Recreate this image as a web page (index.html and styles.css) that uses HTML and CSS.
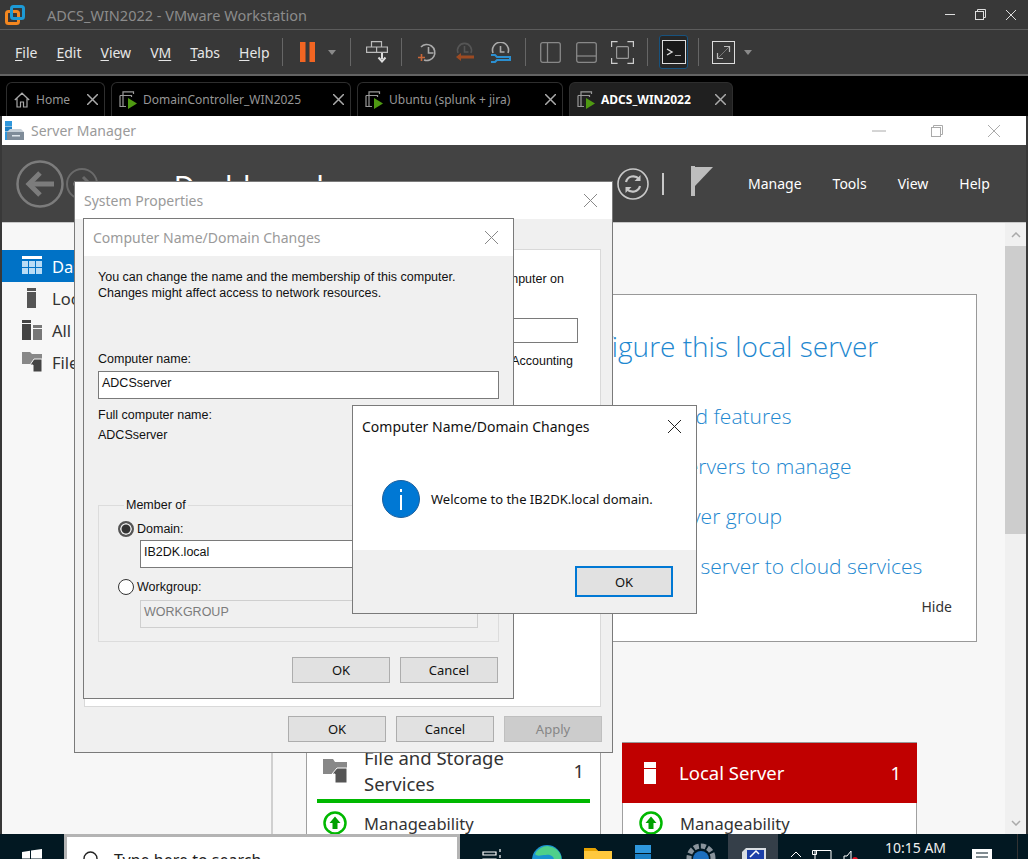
FILE: index.html
```html
<!DOCTYPE html>
<html lang="en">
<head>
    <meta charset="UTF-8">
    <title>ADCS_WIN2022 - VMware Workstation</title>
    <link rel="stylesheet" href="styles.css">
</head>
<body>
<div class="page">
    <div class="titlebar">
        <svg class="vm-logo" width="20" height="20" viewBox="0 0 20 20" fill="none">
            <rect x="1.5" y="6.5" width="12" height="12" rx="2" stroke="#f5871f" stroke-width="3"/>
            <rect x="6.5" y="1.5" width="12" height="12" rx="2" stroke="#1d9ad6" stroke-width="3"/>
        </svg>
        <span class="titlebar-text">ADCS_WIN2022 - VMware Workstation</span>
        <div class="win-ctl">
            <svg width="10" height="10" viewBox="0 0 10 10" stroke="#ddd" fill="none"><path d="M0 4.5h10"/></svg>
            <svg width="11" height="11" viewBox="0 0 11 11" stroke="#ddd" fill="none"><rect x=".5" y="2.5" width="8" height="8"/><path d="M2.5 2.5v-2h8v8h-2"/></svg>
            <svg width="10" height="10" viewBox="0 0 10 10" stroke="#ddd" fill="none"><path d="M0 0l10 10M10 0L0 10"/></svg>
        </div>
    </div>

    <div class="menubar">
        <div class="menu">
            <span><u>F</u>ile</span>
            <span><u>E</u>dit</span>
            <span><u>V</u>iew</span>
            <span>V<u>M</u></span>
            <span><u>T</u>abs</span>
            <span><u>H</u>elp</span>
        </div>
        <i class="sep sep-a"></i>
        <svg class="ico-pause" width="15" height="20" viewBox="0 0 15 20" fill="#f26522"><rect width="5.5" height="20"/><rect x="9.5" width="5.5" height="20"/></svg>
        <i class="caret caret-a"></i>
        <i class="sep sep-b"></i>
        <svg class="ico-send" width="22" height="22" viewBox="0 0 22 22" fill="none" stroke="#bbb" stroke-width="1.2"><path d="M5.500 .6h10v5.400h-10zM.6 6h10v5.400h-10zM10.600 6h10.800v5.400h-10.800z"/><path d="M16 12v6M12.500 16.500l3.500 4 3.500-4" stroke="#ddd" stroke-width="2"/></svg>
        <i class="sep sep-c"></i>
        <svg class="ico-snap" width="21" height="21" viewBox="0 0 21 21" fill="none" stroke="#aaa" stroke-width="1.600"><path d="M4 5a8 8 0 1 1 3 13"/><path d="M11.500 5v6h5"/><path d="M1 15.500h7M4.500 12v7" stroke="#c9683a"/></svg>
        <svg class="ico-snap2" width="21" height="21" viewBox="0 0 21 21" fill="none" stroke="#555" stroke-width="1.600"><path d="M4 11a7 7 0 1 1 13 0"/><path d="M10.500 4v6h4"/><path d="M20 15H4" stroke="#9c4a22" stroke-width="3"/><path d="M7 11l-5 4 5 4z" fill="#9c4a22" stroke="none"/></svg>
        <svg class="ico-snap3" width="21" height="21" viewBox="0 0 21 21" fill="none" stroke="#aaa" stroke-width="1.600"><path d="M3 11a8 8 0 1 1 15 0"/><path d="M10.500 4v6h4"/><path d="M1 13h4l2 2h13v3H7l-2 2H1" stroke="#2b8fd0" stroke-width="2"/></svg>
        <i class="sep sep-d"></i>
        <svg class="ico-panel" width="21" height="21" viewBox="0 0 21 21" fill="none" stroke="#888" stroke-width="1.300"><rect x=".7" y=".7" width="19.600" height="19.600" rx="2"/><path d="M7.500 .7v19.600"/></svg>
        <svg class="ico-panel2" width="21" height="21" viewBox="0 0 21 21" fill="none" stroke="#888" stroke-width="1.300"><rect x=".7" y=".7" width="19.600" height="19.600" rx="2"/><path d="M.7 14h19.600"/></svg>
        <svg class="ico-full" width="23" height="23" viewBox="0 0 23 23" fill="none" stroke="#ccc" stroke-width="1.200"><path d="M.6 6V.6h6M16.400 .6h6v5.400M22.400 17v5.400h-6M6.600 22.400h-6V17"/><rect x="5.600" y="5.600" width="11.800" height="11.800" rx="1" stroke="#999"/></svg>
        <i class="sep sep-e"></i>
        <div class="console">
            <svg width="24" height="24" viewBox="0 0 24 24" fill="#1a1a1a" stroke="#ddd"><rect x=".5" y=".5" width="23" height="23"/><path d="M5 9l5 3-5 3" fill="none" stroke-width="1.400"/><path d="M13 15.500h6" stroke="#aaa"/></svg>
        </div>
        <i class="sep sep-f"></i>
        <svg class="ico-stretch" width="23" height="23" viewBox="0 0 23 23" fill="none" stroke="#ddd"><rect x=".5" y=".5" width="22" height="22"/><path d="M6 17L17 6" stroke="#777"/><path d="M12 5.500h5.500V11M11 17.500H5.500V12" stroke="#bbb" stroke-width="1.200"/></svg>
        <i class="caret caret-b"></i>
    </div>

    <div class="tabstrip">
        <div class="tab tab-home">
            <svg width="16" height="16" viewBox="0 0 16 16" fill="none" stroke="#aaa" stroke-width="1.200"><path d="M.8 8L8 1.200 15.200 8M3 6.500V15h3.500v-5h3v5H13V6.500"/></svg>
            <span class="tab-name">Home</span>
            <svg class="tab-x" width="11" height="11" viewBox="0 0 11 11" stroke="#aaa" stroke-width="1.500"><path d="M0 0l11 11M11 0L0 11"/></svg>
        </div>
        <div class="tab tab-dc">
            <svg width="18" height="18" viewBox="0 0 18 18" fill="none" stroke="#999" stroke-width="1.200"><path d="M4 4V.8h10.500V3M4 4.500h8.500V6M4 4v11M4 4.500H1"/><path d="M1 4.500v11h6"/><path d="M9 7v11l9-5.500z" fill="#4f9a12" stroke="none"/></svg>
            <span class="tab-name">DomainController_WIN2025</span>
            <svg class="tab-x" width="11" height="11" viewBox="0 0 11 11" stroke="#aaa" stroke-width="1.500"><path d="M0 0l11 11M11 0L0 11"/></svg>
        </div>
        <div class="tab tab-ub">
            <svg width="18" height="18" viewBox="0 0 18 18" fill="none" stroke="#999" stroke-width="1.200"><path d="M4 4V.8h10.500V3M4 4.500h8.500V6M4 4v11M4 4.500H1"/><path d="M1 4.500v11h6"/><path d="M9 7v11l9-5.500z" fill="#4f9a12" stroke="none"/></svg>
            <span class="tab-name">Ubuntu (splunk + jira)</span>
            <svg class="tab-x" width="11" height="11" viewBox="0 0 11 11" stroke="#aaa" stroke-width="1.500"><path d="M0 0l11 11M11 0L0 11"/></svg>
        </div>
        <div class="tab tab-on">
            <svg width="18" height="18" viewBox="0 0 18 18" fill="none" stroke="#999" stroke-width="1.200"><path d="M4 4V.8h10.500V3M4 4.500h8.500V6M4 4v11M4 4.500H1"/><path d="M1 4.500v11h6"/><path d="M9 7v11l9-5.500z" fill="#4f9a12" stroke="none"/></svg>
            <span class="tab-name">ADCS_WIN2022</span>
            <svg class="tab-x" width="11" height="11" viewBox="0 0 11 11" stroke="#aaa" stroke-width="1.500"><path d="M0 0l11 11M11 0L0 11"/></svg>
        </div>
    </div>

    <div class="sm">
        <div class="sm-title">
            <svg width="20" height="20" viewBox="0 0 20 20"><rect x="1" y="0" width="7" height="5" fill="#2f97dc"/><rect x="1" y="5.500" width="7" height="5" fill="#1b7fc4"/><rect x="1" y="11" width="6" height="8" fill="#2f97dc"/><path d="M3 11h17v8H3z" fill="#7f8c99"/><path d="M3 11l3-3h11l3 3z" fill="#c7d0d8"/><rect x="8" y="14" width="8" height="1.500" fill="#dfe6ec"/></svg>
            <span class="sm-title-text">Server Manager</span>
            <div class="sm-ctl">
                <svg width="14" height="2" viewBox="0 0 14 2" stroke="#aaa"><path d="M0 1h14"/></svg>
                <svg width="12" height="12" viewBox="0 0 12 12" stroke="#aaa" fill="none"><rect x=".5" y="2.500" width="9" height="9"/><path d="M2.500 2.500v-2h9v9h-2"/></svg>
                <svg width="12" height="12" viewBox="0 0 12 12" stroke="#aaa" fill="none"><path d="M0 0l12 12M12 0L0 12"/></svg>
            </div>
        </div>

        <div class="sm-head">
            <svg class="back" width="48" height="48" viewBox="0 0 48 48" fill="none" stroke="#7c7c7c" stroke-width="2.500"><circle cx="24" cy="24" r="22.500"/><path d="M38 24H14" stroke-width="5"/><path d="M24 13L13 24l11 11" stroke-width="5"/></svg>
            <svg class="forward" width="32" height="32" viewBox="0 0 32 32" fill="none" stroke="#6a6a6a" stroke-width="2"><circle cx="16" cy="16" r="15"/><path d="M7 16h17M17 9l7 7-7 7" stroke-width="3"/></svg>
            <span class="crumb"><span class="crumb-dim">· · ▸▸</span> Dashboard</span>
            <svg class="refresh" width="32" height="32" viewBox="0 0 32 32" fill="none" stroke="#c8c8c8"><circle cx="16" cy="16" r="15" stroke-width="1.600"/><path d="M9 14a7.500 7.500 0 0 1 13-3M23 18a7.500 7.500 0 0 1-13 3" stroke-width="2.200"/><path d="M23.500 7v6h-6zM8.500 25v-6h6z" fill="#c8c8c8" stroke="none"/></svg>
            <i class="head-sep"></i>
            <svg class="flag" width="22" height="30" viewBox="0 0 22 30" fill="#bdbdbd"><rect width="4" height="30"/><path d="M4 1h18L4 20z"/></svg>
            <nav class="head-menu">
                <span>Manage</span>
                <span>Tools</span>
                <span>View</span>
                <span>Help</span>
            </nav>
        </div>

        <div class="sm-body">
            <aside class="nav">
                <div class="nav-row nav-on">
                    <svg width="20" height="20" viewBox="0 0 20 20"><rect width="20" height="3" fill="#fff"/><path d="M0 5h6v6H0zM7 5h6v6H7zM14 5h6v6h-6zM0 12h6v6H0zM7 12h6v6H7zM14 12h6v6h-6z" fill="#b9dcf5"/></svg>
                    <span>Dashboard</span>
                </div>
                <div class="nav-row">
                    <svg width="20" height="20" viewBox="0 0 20 20"><rect x="5" y="0" width="9" height="3" fill="#555"/><rect x="5" y="4" width="9" height="16" fill="#555"/></svg>
                    <span>Local Server</span>
                </div>
                <div class="nav-row">
                    <svg width="20" height="20" viewBox="0 0 20 20"><rect x="0" y="0" width="9" height="3" fill="#444"/><rect x="0" y="4" width="9" height="16" fill="#444"/><rect x="11" y="5" width="9" height="3" fill="#777"/><rect x="11" y="9" width="9" height="11" fill="#777"/></svg>
                    <span>All Servers</span>
                </div>
                <div class="nav-row">
                    <svg width="20" height="20" viewBox="0 0 20 20"><path d="M0 0h8l2 2h10v10H0z" fill="#888"/><path d="M12 7h8v13h-9v-7h-3l4-6z" fill="#444" stroke="#f7f7f7"/></svg>
                    <span>File and Storage Services</span>
                </div>
            </aside>

            <main class="main">
                <section class="welcome">
                    <h2 class="quick-title">Configure this local server</h2>
                    <a class="quick-link">Add roles and features</a>
                    <a class="quick-link">Add other servers to manage</a>
                    <a class="quick-link">Create a server group</a>
                    <a class="quick-link">Connect this server to cloud services</a>
                    <span class="hide">Hide</span>
                </section>
                <div class="roles-note">Roles: 3 &nbsp;|&nbsp; Server groups: 1 &nbsp;|&nbsp; Servers total: 1</div>
                <div class="tiles">
                    <div class="tile">
                        <div class="tile-head">
                            <svg width="24" height="24" viewBox="0 0 24 24"><path d="M0 0h10l2 3h12v12H0z" fill="#888"/><path d="M14 9h10v15H12v-9H9l5-6z" fill="#555" stroke="#fff"/></svg>
                            <span class="tile-name">File and Storage<br>Services</span>
                            <span class="tile-count">1</span>
                        </div>
                        <div class="tile-bar"></div>
                        <div class="tile-row">
                            <svg width="24" height="24" viewBox="0 0 24 24" fill="none"><circle cx="12" cy="12" r="10.500" stroke="#00b800" stroke-width="2.500"/><path d="M12 5.500l5.500 6.500h-3v6h-5v-6h-3z" fill="#00a000"/></svg>
                            <span>Manageability</span>
                        </div>
                    </div>
                    <div class="tile tile-red">
                        <div class="tile-head">
                            <svg width="24" height="24" viewBox="0 0 24 24"><rect x="6" y="1" width="12" height="6" fill="#fff"/><rect x="6" y="8" width="12" height="15" fill="#fff"/></svg>
                            <span class="tile-name">Local Server</span>
                            <span class="tile-count">1</span>
                        </div>
                        <div class="tile-row">
                            <svg width="24" height="24" viewBox="0 0 24 24" fill="none"><circle cx="12" cy="12" r="10.500" stroke="#00b800" stroke-width="2.500"/><path d="M12 5.500l5.500 6.500h-3v6h-5v-6h-3z" fill="#00a000"/></svg>
                            <span>Manageability</span>
                        </div>
                    </div>
                </div>
            </main>

            <div class="scroll">
                <div class="scroll-btn"><svg width="10" height="6" viewBox="0 0 10 6" fill="none" stroke="#aaa" stroke-width="1.500"><path d="M1 5l4-4 4 4"/></svg></div>
                <div class="scroll-thumb"></div>
                <div class="scroll-rest"></div>
                <div class="scroll-btn"><svg width="10" height="6" viewBox="0 0 10 6" fill="none" stroke="#aaa" stroke-width="1.500"><path d="M1 1l4 4 4-4"/></svg></div>
            </div>
        </div>
    </div>

    <div class="taskbar">
        <svg class="start" width="20" height="20" viewBox="0 0 20 20" fill="#fff"><path d="M0 3l8-1.200V9.500H0zM9 1.600L20 0v9.500H9zM0 10.500h8v7.700L0 17zM9 10.500h11V20L9 18.400z"/></svg>
        <div class="search">
            <svg width="18" height="18" viewBox="0 0 18 18" fill="none" stroke="#222" stroke-width="1.400"><circle cx="7.500" cy="7.500" r="6.500"/><path d="M3 17l-1 1"/></svg>
            <span>Type here to search</span>
        </div>
        <svg class="tb-view" width="20" height="20" viewBox="0 0 20 20" fill="none" stroke="#fff" stroke-width="1.200"><path d="M1 3h13v3H1zM1 10h13v6H1zM1 0h0M18 0v3M18 6v3"/></svg>
        <svg class="tb-edge" width="32" height="32" viewBox="0 0 32 32"><circle cx="16" cy="16" r="15" fill="#1a93cf"/><path d="M4 10A14 14 0 0 1 30 12c1 4-3 7-8 6 3-4-2-8-7-7-5 0-9 2-11-1z" fill="#4fd08a"/></svg>
        <svg class="tb-folder" width="28" height="24" viewBox="0 0 28 24"><path d="M0 2h11l3 3h14v19H0z" fill="#ffc83d"/><path d="M0 2h11l3 3H0z" fill="#e6a100"/></svg>
        <svg class="tb-srv" width="16" height="28" viewBox="0 0 16 28"><rect width="16" height="8" y="0" fill="#2f97dc"/><rect width="16" height="8" y="9" fill="#1b7fc4"/><rect width="16" height="10" y="18" fill="#2f97dc"/></svg>
        <svg class="tb-gear" width="30" height="30" viewBox="0 0 30 30"><circle cx="15" cy="15" r="12" fill="none" stroke="#8a949c" stroke-width="5" stroke-dasharray="5 2"/><circle cx="15" cy="16" r="8" fill="#1c6fbe"/></svg>
        <div class="tb-active">
            <svg width="28" height="28" viewBox="0 0 28 28"><path d="M3 6l4-4h20v14H3z" fill="#d8dde2"/><path d="M8 4h17v10H8z" fill="#1b3fa8"/><path d="M11 11l6-6 3 3" stroke="#fff" stroke-width="1.500" fill="none"/></svg>
        </div>
        <svg class="tb-up" width="12" height="7" viewBox="0 0 12 7" fill="none" stroke="#fff"><path d="M1 6l5-5 5 5"/></svg>
        <svg class="tb-net" width="20" height="16" viewBox="0 0 20 16" fill="none" stroke="#fff"><path d="M3 .5h16v12H3zM.5 .5h4v4h-4z"/></svg>
        <svg class="tb-vol" width="16" height="16" viewBox="0 0 16 16" fill="none" stroke="#fff"><path d="M1 6h3l4-5v14l-4-4H1z"/><circle cx="12" cy="10" r="3" fill="#e81123" stroke="none"/></svg>
        <span class="clock">10:15 AM</span>
        <svg class="tb-note" width="20" height="16" viewBox="0 0 20 16" fill="#fff"><path d="M0 0h20v16H0z"/><path d="M4 4h12M4 8h12" stroke="#021822" stroke-width="1.200"/></svg>
        <i class="tb-end"></i>
    </div>

    <div class="dlg dlg-sys">
        <div class="dlg-title dlg-title-off">
            <span>System Properties</span>
            <svg width="13" height="13" viewBox="0 0 13 13" stroke="#888" fill="none"><path d="M0 0l13 13M13 0L0 13"/></svg>
        </div>
        <div class="dlg-body sys-body">
            <div class="sys-pane">
                <p class="sys-line sys-line-1">Windows uses the following information to identify your computer on</p>
                <div class="sys-input"></div>
                <p class="sys-line sys-line-2">For example: "IIS Production Server" or "Accounting</p>
            </div>
            <div class="btn-row sys-btns">
                <button class="btn">OK</button>
                <button class="btn">Cancel</button>
                <button class="btn btn-off">Apply</button>
            </div>
        </div>
    </div>

    <div class="dlg dlg-name">
        <div class="dlg-title dlg-title-off">
            <span>Computer Name/Domain Changes</span>
            <svg width="13" height="13" viewBox="0 0 13 13" stroke="#888" fill="none"><path d="M0 0l13 13M13 0L0 13"/></svg>
        </div>
        <div class="dlg-body name-body">
            <p class="intro">You can change the name and the membership of this computer.<br>Changes might affect access to network resources.</p>
            <label class="lbl lbl-name">Computer name:</label>
            <div class="field">ADCSserver</div>
            <div class="lbl lbl-full">Full computer name:</div>
            <div class="lbl lbl-val">ADCSserver</div>
            <fieldset class="member">
                <legend>Member of</legend>
                <div class="radio-row"><i class="radio radio-on"></i>Domain:</div>
                <div class="field field-in">IB2DK.local</div>
                <div class="radio-row radio-row-2"><i class="radio"></i>Workgroup:</div>
                <div class="field field-in field-off">WORKGROUP</div>
            </fieldset>
            <div class="btn-row name-btns">
                <button class="btn">OK</button>
                <button class="btn">Cancel</button>
            </div>
        </div>
    </div>

    <div class="dlg dlg-msg">
        <div class="dlg-title msg-title">
            <span>Computer Name/Domain Changes</span>
            <svg width="13" height="13" viewBox="0 0 13 13" stroke="#222" fill="none"><path d="M0 0l13 13M13 0L0 13"/></svg>
        </div>
        <div class="msg-main">
            <svg width="38" height="38" viewBox="0 0 38 38"><circle cx="19" cy="19" r="18.500" fill="#0078d4" stroke="#1c5f9c"/><rect x="18" y="9" width="2" height="3" fill="#fff"/><rect x="18" y="15" width="2" height="15" fill="#fff"/></svg>
            <span>Welcome to the IB2DK.local domain.</span>
        </div>
        <div class="msg-foot">
            <button class="btn btn-focus">OK</button>
        </div>
    </div>
</div>
</body>
</html>
```

FILE: styles.css
```css
* {
    box-sizing: border-box;
}
html, body {
    margin: 0;
    height: 859px;
    overflow: hidden;
}
body {
    font-family: "Noto Sans", sans-serif;
    background: #383838;
}
p {
    margin: 0;
}
.page {
    position: relative;
    width: 1028px;
    height: 859px;
    display: flex;
    flex-direction: column;
    overflow: hidden;
}

/* vmware chrome */
.titlebar {
    height: 30px;
    flex: none;
    display: flex;
    align-items: center;
    padding-left: 5px;
    background: #383838;
    border-bottom: 1px solid #5c5c5c;
}
.titlebar-text {
    margin-left: 22px;
    color: #8c8c8c;
    font-size: 14.500px;
}
.win-ctl {
    margin-left: auto;
    margin-right: 12px;
    display: flex;
    align-items: center;
    gap: 20px;
}
.menubar {
    height: 46px;
    flex: none;
    display: flex;
    align-items: center;
    background: #383838;
    border-bottom: 2px solid #636363;
    padding-left: 15px;
}
.menu {
    display: flex;
    gap: 19px;
    width: 267px;
    color: #e6e6e6;
    font-size: 14px;
}
.menu u {
    text-underline-offset: 2px;
}
.sep {
    display: block;
    width: 1px;
    height: 28px;
    background: #666;
    flex: none;
}
.caret {
    display: block;
    width: 0;
    height: 0;
    border-left: 4.500px solid transparent;
    border-right: 4.500px solid transparent;
    border-top: 5px solid #8a8a8a;
    flex: none;
}
.ico-pause { margin-left: 17px; }
.caret-a { margin-left: 13px; }
.sep-b { margin-left: 14px; }
.ico-send { margin-left: 15px; }
.sep-c { margin-left: 13px; }
.ico-snap { margin-left: 15px; }
.ico-snap2 { margin-left: 16px; }
.ico-snap3 { margin-left: 15px; }
.sep-d { margin-left: 14px; }
.ico-panel { margin-left: 14px; }
.ico-panel2 { margin-left: 15px; }
.ico-full { margin-left: 14px; }
.sep-e { margin-left: 13px; }
.console {
    margin-left: 11px;
    width: 29px;
    height: 34px;
    display: flex;
    align-items: center;
    justify-content: center;
    background: #262626;
    border: 1px solid #17527e;
    border-radius: 3px;
}
.sep-f { margin-left: 10px; }
.ico-stretch { margin-left: 13px; }
.caret-b { margin-left: 9px; }

.tabstrip {
    height: 40px;
    flex: none;
    display: flex;
    align-items: flex-end;
    gap: 6px;
    padding-left: 6px;
    background: #000;
}
.tab {
    height: 34px;
    display: flex;
    align-items: center;
    padding-left: 7px;
    border: 1px solid #2e2e2e;
    border-bottom: 0;
    border-radius: 6px 6px 0 0;
    color: #969696;
    font-size: 12px;
}
.tab svg:first-child {
    flex: none;
}
.tab-name {
    margin-left: 6px;
    white-space: nowrap;
}
.tab-x {
    margin-left: auto;
    margin-right: 6px;
    flex: none;
}
.tab-home { width: 99px; }
.tab-dc { width: 240px; }
.tab-ub { width: 206px; }
.tab-on {
    width: 164px;
    background: #202020;
    color: #fff;
    font-weight: 700;
}

/* server manager */
.sm {
    flex: 1;
    min-height: 0;
    margin: 0 2px;
    display: flex;
    flex-direction: column;
    background: #f7f7f7;
}
.sm-title {
    height: 29px;
    flex: none;
    display: flex;
    align-items: center;
    padding-left: 2px;
    background: #fff;
}
.sm-title-text {
    margin-left: 7px;
    color: #9a9a9a;
    font-size: 14px;
}
.sm-ctl {
    margin-left: auto;
    margin-right: 26px;
    display: flex;
    align-items: center;
    gap: 45px;
}
.sm-head {
    height: 78px;
    flex: none;
    display: flex;
    align-items: center;
    padding-left: 14px;
    background: #434343;
    border-bottom: 1px solid #c8c8c8;
    color: #fff;
}
.back, .forward { flex: none; }
.forward { margin-left: 2px; }
.crumb {
    width: 514px;
    margin-left: 5px;
    margin-top: 3px;
    font-size: 29px;
    white-space: nowrap;
}
.crumb-dim {
    color: #6f6f6f;
    font-size: 22px;
    letter-spacing: 3px;
}
.refresh { flex: none; }
.head-sep {
    display: block;
    width: 2px;
    height: 22px;
    margin-left: 13px;
    background: #c8c8c8;
}
.flag {
    margin-left: 27px;
    margin-top: -6px;
    flex: none;
}
.head-menu {
    display: flex;
    gap: 31px;
    margin-left: 35px;
    font-size: 14px;
}
.sm-body {
    flex: 1;
    min-height: 0;
    display: flex;
}
.nav {
    width: 271px;
    flex: none;
    padding-top: 27px;
    background: #f7f7f7;
    border-right: 2px solid #d0d0d0;
    font-size: 16.500px;
    color: #333;
}
.nav-row {
    height: 32px;
    display: flex;
    align-items: center;
    gap: 10px;
    padding-left: 20px;
}
.nav-on {
    background: #0072c6;
    color: #fff;
}
.main {
    flex: 1;
    min-width: 0;
    padding: 71px 28px 0 33px;
    overflow: hidden;
}
.welcome {
    position: relative;
    height: 348px;
    padding: 31px 0 0 246px;
    background: #fff;
    border: 1px solid #999;
}
.quick-title {
    margin: 0 0 30px;
    color: #1e88d0;
    font-family: "Open Sans", sans-serif;
    font-size: 28px;
    font-weight: 300;
    line-height: 40px;
    white-space: nowrap;
}
.quick-link {
    display: block;
    height: 50px;
    margin-left: 24px;
    color: #1e88d0;
    font-family: "Open Sans", sans-serif;
    font-size: 21px;
    font-weight: 300;
    line-height: 40px;
    white-space: nowrap;
}
.hide {
    position: absolute;
    right: 24px;
    bottom: 25px;
    color: #333;
    font-size: 14px;
}
.roles-note {
    margin-top: 71px;
    width: 308px;
    height: 29px;
    color: #333;
    font-size: 14px;
    line-height: 20px;
    white-space: nowrap;
    display: flex;
    justify-content: flex-end;
}
.tiles {
    display: flex;
    gap: 21px;
}
.tile {
    width: 295px;
    height: 120px;
    flex: none;
    background: #fff;
    border: 1px solid #a0a0a0;
    border-bottom: 0;
    color: #333;
}
.tile-head {
    height: 56px;
    display: flex;
    align-items: center;
    padding: 0 16px;
    font-size: 18.500px;
    line-height: 26px;
}
.tile-name { margin-left: 17px; }
.tile-count { margin-left: auto; }
.tile-bar {
    height: 4px;
    margin: 0 10px;
    background: #00b800;
}
.tile-row {
    height: 40px;
    display: flex;
    align-items: center;
    gap: 17px;
    padding: 0 16px;
    font-size: 16.500px;
}
.tile-red {
    border-top-color: #999;
}
.tile-red .tile-head {
    height: 60px;
    margin: 0 -1px;
    background: #c00000;
    color: #fff;
}
.tile-red .tile-name {
    margin-left: 17px;
}
.scroll {
    width: 21px;
    flex: none;
    display: flex;
    flex-direction: column;
    background: #f0f0f0;
}
.scroll-btn {
    height: 23px;
    flex: none;
    display: flex;
    align-items: center;
    justify-content: center;
}
.scroll-thumb {
    height: 288px;
    flex: none;
    background: #cdcdcd;
}
.scroll-rest { flex: 1; }

/* taskbar */
.taskbar {
    height: 25px;
    flex: none;
    display: flex;
    align-items: flex-start;
    background: #021822;
    overflow: hidden;
}
.start {
    flex: none;
    margin: 15px 0 0 22px;
}
.search {
    width: 396px;
    height: 40px;
    flex: none;
    margin-left: 22px;
    display: flex;
    align-items: flex-start;
    gap: 13px;
    padding: 12px 0 0 16px;
    background: #fff;
    border: 3px solid #b4b4b4;
    border-bottom: 0;
    color: #222;
    font-size: 16px;
}
.search svg { flex: none; margin-top: 2px; }
.search span { line-height: 22px; white-space: nowrap; }
.tb-view { margin: 15px 0 0 22px; flex: none; }
.tb-edge { margin: 10px 0 0 29px; flex: none; }
.tb-folder { margin: 12px 0 0 21px; flex: none; }
.tb-srv { margin: 11px 0 0 23px; flex: none; }
.tb-gear { margin: 9px 0 0 35px; flex: none; }
.tb-active {
    width: 50px;
    height: 25px;
    flex: none;
    margin-left: 12px;
    padding: 12px 0 0 11px;
    background: #353f49;
}
.tb-up { margin: 17px 0 0 12px; flex: none; }
.tb-net { margin: 16px 0 0 10px; flex: none; }
.tb-vol { margin: 16px 0 0 11px; flex: none; }
.clock {
    margin: 5px 0 0 26px;
    color: #f0f0f0;
    font-size: 14px;
    line-height: 18px;
    white-space: nowrap;
}
.tb-note { margin: 15px 0 0 26px; flex: none; }
.tb-end {
    display: block;
    width: 1px;
    height: 25px;
    margin-left: 25px;
    background: #333;
}

/* dialogs */
.dlg {
    position: absolute;
    display: flex;
    flex-direction: column;
    background: #f0f0f0;
    border: 1px solid #7a7a7a;
    color: #111;
    font-family: "Liberation Sans", sans-serif;
    font-size: 12.500px;
}
.dlg-title {
    height: 37px;
    flex: none;
    display: flex;
    align-items: center;
    justify-content: space-between;
    padding: 0 15px 0 9px;
    background: #fff;
    font-family: "Noto Sans", sans-serif;
    font-size: 14px;
}
.dlg-title-off {
    color: #9a9a9a;
}
.dlg-body {
    flex: 1;
    min-height: 0;
}
.btn {
    width: 98px;
    height: 26px;
    padding: 0;
    background: #e1e1e1;
    border: 1px solid #adadad;
    color: #111;
    font-family: "Noto Sans", sans-serif;
    font-size: 13px;
}
.btn-off {
    background: #cccccc;
    border-color: #bfbfbf;
    color: #868686;
}
.btn-focus {
    height: 31px;
    border: 2px solid #0078d4;
}
.btn-row {
    display: flex;
    justify-content: flex-end;
    gap: 10px;
}
.dlg-sys {
    left: 74px;
    top: 181px;
    width: 539px;
    height: 572px;
}
.sys-body {
    padding: 30px 0 0 9px;
}
.sys-pane {
    width: 517px;
    height: 458px;
    padding-top: 21px;
    background: #fff;
    border: 1px solid #d9d9d9;
    overflow: hidden;
}
.sys-line {
    display: flex;
    justify-content: flex-end;
    white-space: nowrap;
    line-height: 16px;
}
.sys-line-1 { padding-right: 36px; }
.sys-line-2 { padding-right: 27px; margin-top: 10px; }
.sys-input {
    width: 377px;
    height: 25px;
    margin: 31px 0 0 116px;
    border: 1px solid #7a7a7a;
}
.sys-btns {
    margin: 9px 10px 0 0;
}
.dlg-name {
    left: 83px;
    top: 218px;
    width: 431px;
    height: 481px;
}
.name-body {
    padding: 13px 14px 0;
}
.intro {
    line-height: 16px;
    white-space: nowrap;
}
.lbl {
    display: block;
    line-height: 16px;
}
.lbl-name { margin-top: 50px; }
.lbl-full { margin-top: 8px; }
.lbl-val { margin-top: 4px; }
.field {
    height: 28px;
    margin-top: 4px;
    padding: 3px 3px 0;
    background: #fff;
    border: 1px solid #7a7a7a;
    line-height: 16px;
}
.member {
    margin: 54px 0 0;
    padding: 8px 19px 13px;
    min-width: 0;
    border: 1px solid #dcdcdc;
}
.member legend {
    padding: 0 2px;
    margin-left: 6px;
    line-height: 16px;
}
.radio-row {
    display: flex;
    align-items: center;
    gap: 3px;
    line-height: 16px;
}
.radio-row-2 { margin-top: 11px; }
.radio {
    display: block;
    width: 16px;
    height: 16px;
    background: #fff;
    border: 1px solid #333;
    border-radius: 50%;
}
.radio-on {
    background: #f0f0f0;
    border-width: 2px;
    border-color: #555;
    box-shadow: inset 0 0 0 1.500px #f0f0f0;
    background: #333;
}
.field-in {
    margin: 3px 0 0 22px;
    width: 338px;
}
.field-off {
    margin-top: 5px;
    background: #f0f0f0;
    border-color: #cfcfcf;
    color: #7c7c7c;
}
.name-btns {
    margin: 15px 1px 0 0;
}
.dlg-msg {
    left: 352px;
    top: 405px;
    width: 345px;
    height: 209px;
    font-family: "Noto Sans", sans-serif;
    font-size: 13px;
}
.msg-title {
    height: 41px;
    padding-right: 15px;
    color: #111;
}
.msg-main {
    height: 103px;
    flex: none;
    display: flex;
    align-items: center;
    gap: 11px;
    padding-left: 29px;
    background: #fff;
}
.msg-foot {
    flex: 1;
    display: flex;
    justify-content: flex-end;
    align-items: flex-start;
    padding: 16px 23px 0 0;
}
```
